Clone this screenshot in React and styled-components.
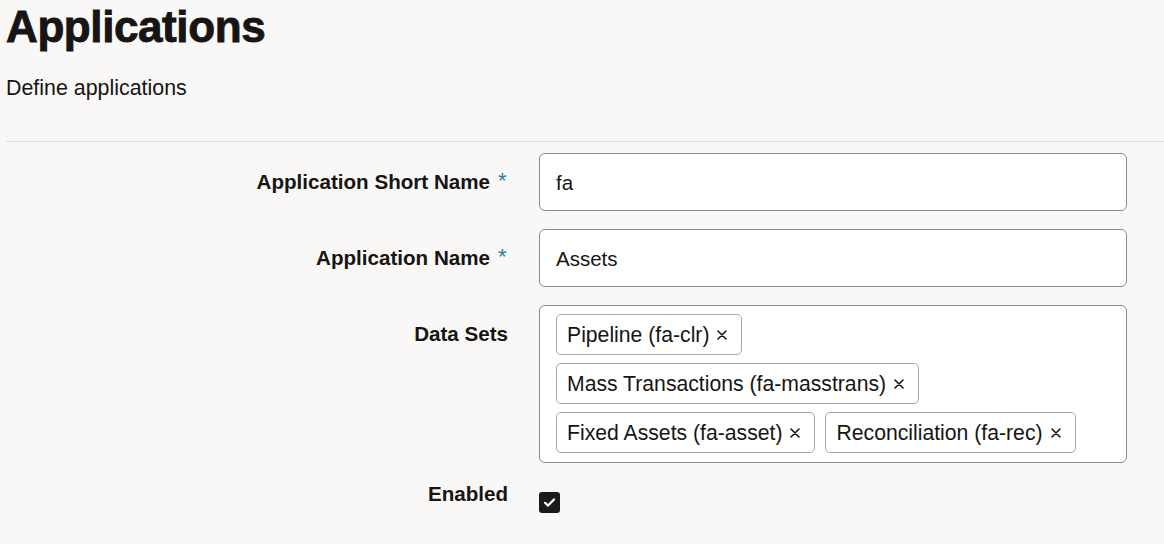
import React from 'react';
import styled, { createGlobalStyle } from 'styled-components';

const GlobalStyle = createGlobalStyle`
  html, body {
    margin: 0;
    background: #f9f8f6;
  }
  body {
    font-family: "Liberation Sans", Arial, sans-serif;
    color: #161513;
  }
`;

const Page = styled.div`
  padding: 2px 0 0 6px;
`;

const Title = styled.h1`
  margin: 0;
  font-size: 44px;
  line-height: 50px;
  font-weight: 700;
  letter-spacing: -0.4px;
  -webkit-text-stroke: 0.9px #161513;
`;

const Subtitle = styled.p`
  margin: 24px 0 0;
  font-size: 21.4px;
  line-height: 24px;
`;

const Divider = styled.hr`
  margin: 41px 0 0;
  border: 0;
  border-top: 1px solid #e1dfdb;
`;

const Form = styled.div`
  display: grid;
  grid-template-columns: 502px 588px;
  column-gap: 31px;
  row-gap: 18px;
  padding-top: 11px;
`;

const Label = styled.div`
  display: flex;
  justify-content: flex-end;
  align-items: flex-start;
  padding-top: ${(p) => p.$top}px;
  font-size: 20.6px;
  line-height: 24px;
  font-weight: 700;
`;

const Required = styled.span`
  color: #227ea7;
  font-size: 22px;
  line-height: 16px;
  font-weight: 400;
  margin: 3px 0 0 8px;
  width: 10px;
`;

const Input = styled.div`
  box-sizing: border-box;
  height: 58px;
  display: flex;
  align-items: center;
  padding: 2px 16px 0;
  background: #fff;
  border: 1px solid #8d8b88;
  border-radius: 6px;
  font-size: 20.5px;
`;

const ChipBox = styled.div`
  box-sizing: border-box;
  display: flex;
  flex-direction: column;
  gap: 8px;
  padding: 8px 16px 9px;
  background: #fff;
  border: 1px solid #8d8b88;
  border-radius: 6px;
`;

const ChipRow = styled.div`
  display: flex;
  gap: 10px;
`;

const Chip = styled.span`
  box-sizing: border-box;
  height: 41px;
  display: inline-flex;
  align-items: center;
  padding: 1px 14px 0 10px;
  border: 1px solid #a9a7a3;
  border-radius: 5px;
  font-size: 21.2px;
`;

const ChipRemove = styled.svg`
  margin-left: 8px;
  flex: none;
`;

const CheckCell = styled.div`
  padding-top: 11px;
`;

const Checkbox = styled.span`
  display: inline-flex;
  align-items: center;
  justify-content: center;
  width: 21px;
  height: 21px;
  background: #1d1b19;
  border-radius: 3px;
`;

function Tag({ children }) {
  return (
    <Chip>
      {children}
      <ChipRemove width="10" height="10" viewBox="0 0 10 10">
        <path d="M1 1 L9 9 M9 1 L1 9" stroke="#161513" strokeWidth="1.6" strokeLinecap="round" />
      </ChipRemove>
    </Chip>
  );
}

export default function App() {
  return (
    <>
      <GlobalStyle />
      <Page>
        <Title>Applications</Title>
        <Subtitle>Define applications</Subtitle>
        <Divider />
        <Form>
          <Label $top={17}>
            Application Short Name<Required>*</Required>
          </Label>
          <Input>fa</Input>

          <Label $top={17}>
            Application Name<Required>*</Required>
          </Label>
          <Input>Assets</Input>

          <Label $top={17}>Data Sets</Label>
          <ChipBox>
            <ChipRow>
              <Tag>Pipeline (fa-clr)</Tag>
            </ChipRow>
            <ChipRow>
              <Tag>Mass Transactions (fa-masstrans)</Tag>
            </ChipRow>
            <ChipRow>
              <Tag>Fixed Assets (fa-asset)</Tag>
              <Tag>Reconciliation (fa-rec)</Tag>
            </ChipRow>
          </ChipBox>

          <Label $top={1}>Enabled</Label>
          <CheckCell>
            <Checkbox>
              <svg width="13" height="13" viewBox="0 0 13 13">
                <path d="M2 6.8 L5 9.6 L11 3.4" fill="none" stroke="#fff" strokeWidth="2.2" strokeLinecap="round" strokeLinejoin="round" />
              </svg>
            </Checkbox>
          </CheckCell>
        </Form>
      </Page>
    </>
  );
}
